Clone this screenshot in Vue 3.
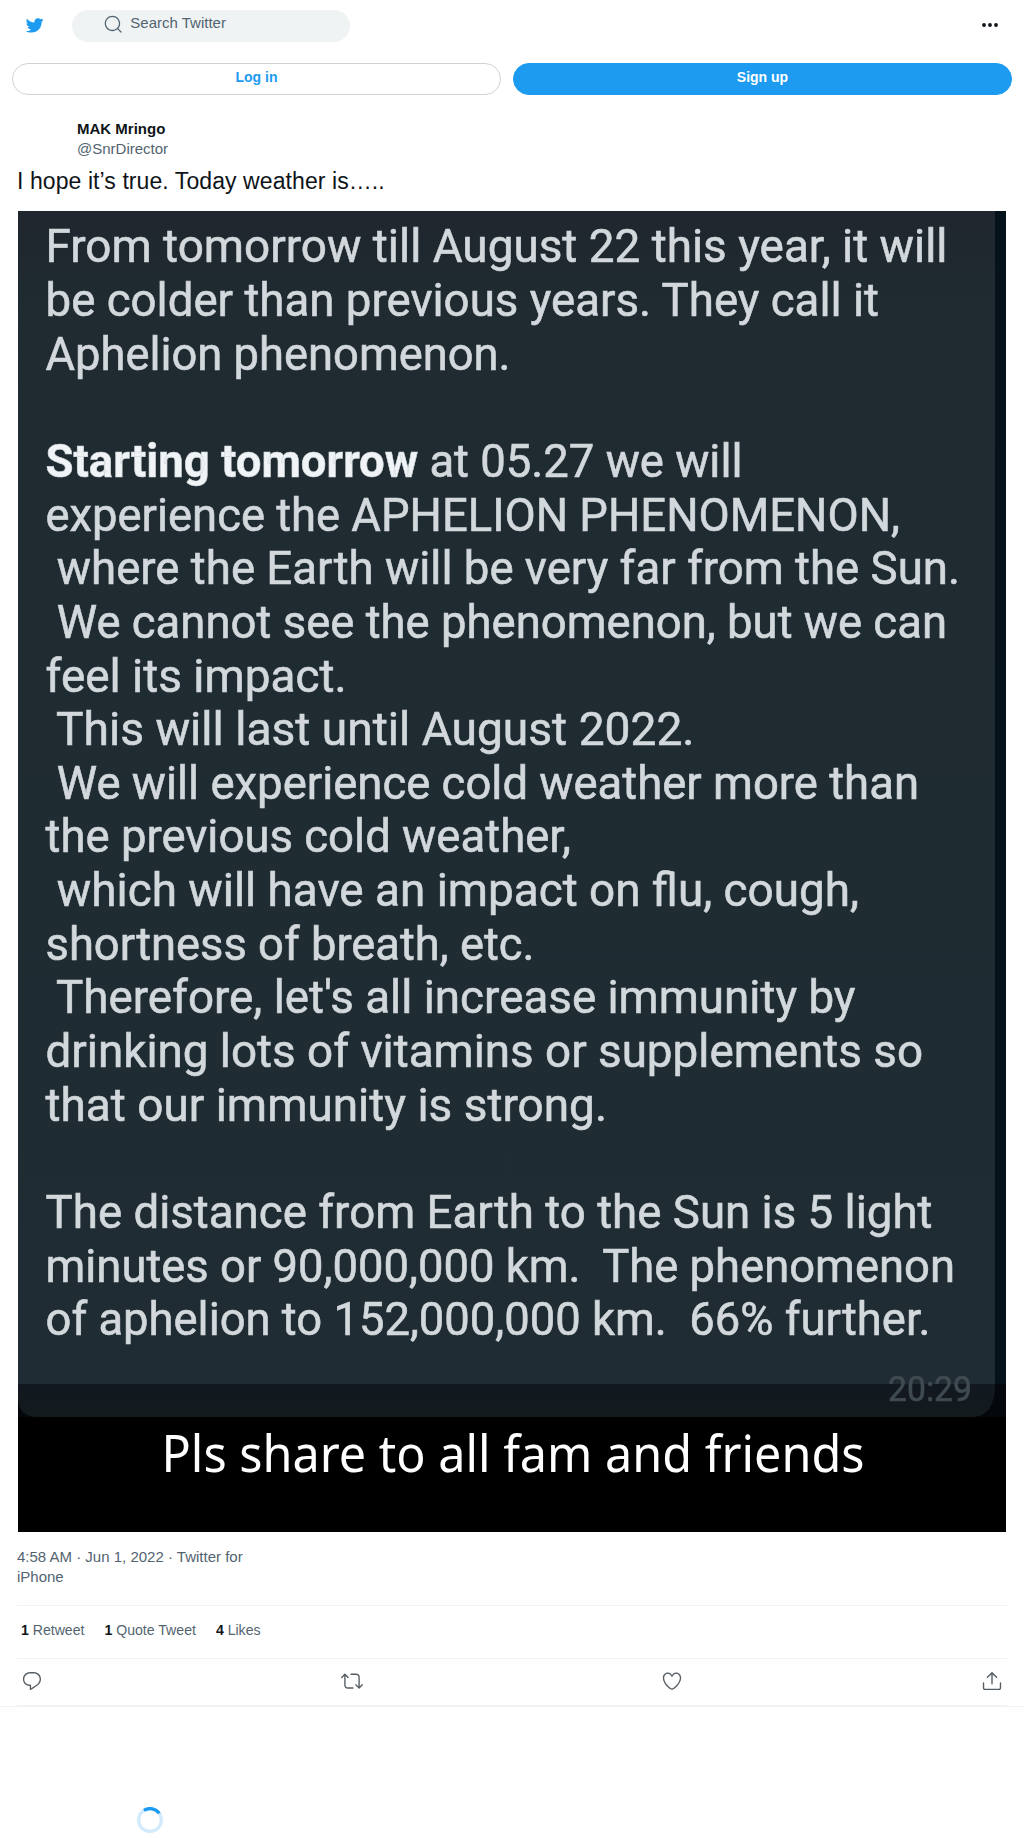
<script setup>
// one entry per row of the message, width is the row's length in the photo
const lines = [
  { row: 0, text: 'From tomorrow till August 22 this year, it will', width: 902 },
  { row: 1, text: 'be colder than previous years. They call it', width: 833.5 },
  { row: 2, text: 'Aphelion phenomenon.', width: 465 },
  { row: 4, bold: 'Starting tomorrow', text: ' at 05.27 we will', width: 697 },
  { row: 5, text: 'experience the APHELION PHENOMENON,', width: 854.5 },
  { row: 6, text: ' where the Earth will be very far from the Sun.', width: 914.5 },
  { row: 7, text: ' We cannot see the phenomenon, but we can', width: 901.5 },
  { row: 8, text: 'feel its impact.', width: 301 },
  { row: 9, text: ' This will last until August 2022.', width: 649 },
  { row: 10, text: ' We will experience cold weather more than', width: 873.5 },
  { row: 11, text: 'the previous cold weather,', width: 525.5 },
  { row: 12, text: ' which will have an impact on flu, cough,', width: 813.5 },
  { row: 13, text: 'shortness of breath, etc.', width: 489 },
  { row: 14, text: " Therefore, let's all increase immunity by", width: 810 },
  { row: 15, text: 'drinking lots of vitamins or supplements so', width: 877.5 },
  { row: 16, text: 'that our immunity is strong.', width: 561.5 },
  { row: 18, text: 'The distance from Earth to the Sun is 5 light', width: 887 },
  { row: 19, text: 'minutes or 90,000,000 km.  The phenomenon', width: 909.5 },
  { row: 20, text: 'of aphelion to 152,000,000 km.  66% further.', width: 885 }
]

const stats = [
  { count: 1, label: 'Retweet' },
  { count: 1, label: 'Quote Tweet' },
  { count: 4, label: 'Likes' }
]

const actions = [
  {
    name: 'Reply',
    path: 'M14.046 2.242l-4.148-.01h-.002c-4.374 0-7.8 3.427-7.8 7.802 0 4.098 3.186 7.206 7.465 7.37v3.828c0 .108.044.286.12.403.142.225.384.347.632.347.138 0 .277-.038.402-.118.264-.168 6.473-4.14 8.088-5.506 1.902-1.61 3.04-3.97 3.043-6.312v-.017c-.006-4.367-3.43-7.787-7.8-7.788zm3.787 12.972c-1.134.96-4.862 3.405-6.772 4.643V16.67c0-.414-.335-.75-.75-.75h-.396c-3.66 0-6.318-2.476-6.318-5.886 0-3.534 2.768-6.302 6.3-6.302l4.147.01h.002c3.532 0 6.3 2.766 6.302 6.296-.003 1.91-.942 3.844-2.514 5.176z'
  },
  {
    name: 'Retweet',
    path: 'M23.77 15.67c-.292-.293-.767-.293-1.06 0l-2.22 2.22V7.65c0-2.068-1.683-3.75-3.75-3.75h-5.85c-.414 0-.75.336-.75.75s.336.75.75.75h5.85c1.24 0 2.25 1.01 2.25 2.25v10.24l-2.22-2.22c-.293-.293-.768-.293-1.06 0s-.294.768 0 1.06l3.5 3.5c.145.147.337.22.53.22s.383-.072.53-.22l3.5-3.5c.294-.292.294-.767 0-1.06zm-10.66 3.28H7.26c-1.24 0-2.25-1.01-2.25-2.25V6.46l2.22 2.22c.148.147.34.22.532.22s.384-.073.53-.22c.293-.293.293-.768 0-1.06l-3.5-3.5c-.293-.294-.768-.294-1.06 0l-3.5 3.5c-.294.292-.294.767 0 1.06s.767.293 1.06 0l2.22-2.22V16.7c0 2.068 1.683 3.75 3.75 3.75h5.85c.414 0 .75-.336.75-.75s-.337-.75-.75-.75z'
  },
  {
    name: 'Like',
    path: 'M12 21.638h-.014C9.403 21.59 1.95 14.856 1.95 8.478c0-3.064 2.525-5.754 5.403-5.754 2.29 0 3.83 1.58 4.646 2.73.814-1.148 2.354-2.73 4.645-2.73 2.88 0 5.404 2.69 5.404 5.755 0 6.376-7.454 13.11-10.037 13.157H12zM7.354 4.225c-2.08 0-3.903 1.988-3.903 4.255 0 5.74 7.034 11.596 8.55 11.658 1.518-.062 8.55-5.917 8.55-11.658 0-2.267-1.823-4.255-3.903-4.255-2.528 0-3.94 2.936-3.952 2.965-.23.562-1.156.562-1.387 0-.014-.03-1.425-2.965-3.954-2.965z'
  },
  {
    name: 'Share',
    path: 'M17.53 7.47l-5-5c-.293-.293-.768-.293-1.06 0l-5 5c-.294.293-.294.768 0 1.06s.767.294 1.06 0l3.72-3.72V15c0 .414.336.75.75.75s.75-.336.75-.75V4.81l3.72 3.72c.146.147.338.22.53.22s.384-.072.53-.22c.293-.293.293-.767 0-1.06zM19.708 21.944H4.292C3.028 21.944 2 20.916 2 19.652V14c0-.414.336-.75.75-.75s.75.336.75.75v5.652c0 .437.355.792.792.792h15.416c.437 0 .792-.355.792-.792V14c0-.414.336-.75.75-.75s.75.336.75.75v5.652c0 1.264-1.028 2.292-2.292 2.292z'
  }
]
</script>

<template>
  <div class="page">
    <header class="topbar">
      <svg class="logo" viewBox="0 0 24 24">
        <path d="M23.643 4.937c-.835.37-1.732.62-2.675.733.962-.576 1.7-1.49 2.048-2.578-.9.534-1.897.922-2.958 1.13-.85-.904-2.06-1.47-3.4-1.47-2.572 0-4.658 2.086-4.658 4.66 0 .364.042.718.12 1.06-3.873-.195-7.304-2.05-9.602-4.868-.4.69-.63 1.49-.63 2.342 0 1.616.823 3.043 2.072 3.878-.764-.025-1.482-.234-2.11-.583v.06c0 2.257 1.605 4.14 3.737 4.568-.392.106-.803.162-1.227.162-.3 0-.593-.028-.877-.082.593 1.85 2.313 3.198 4.352 3.234-1.595 1.25-3.604 1.995-5.786 1.995-.376 0-.747-.022-1.112-.065 2.062 1.323 4.51 2.093 7.14 2.093 8.57 0 13.255-7.098 13.255-13.254 0-.2-.005-.402-.014-.602.91-.658 1.7-1.477 2.323-2.41z" />
      </svg>
      <div class="search">
        <svg viewBox="0 0 24 24">
          <path d="M21.53 20.47l-3.66-3.66C19.195 15.24 20 13.214 20 11c0-4.97-4.03-9-9-9s-9 4.03-9 9 4.03 9 9 9c2.215 0 4.24-.804 5.808-2.13l3.66 3.66c.147.146.34.22.53.22s.385-.073.53-.22c.295-.293.295-.767.002-1.06zM3.5 11c0-4.135 3.365-7.5 7.5-7.5s7.5 3.365 7.5 7.5-3.365 7.5-7.5 7.5-7.5-3.365-7.5-7.5z" />
        </svg>
        <span>Search Twitter</span>
      </div>
      <svg class="more" viewBox="0 0 16 4">
        <circle cx="2" cy="2" r="1.9" />
        <circle cx="8" cy="2" r="1.9" />
        <circle cx="14" cy="2" r="1.9" />
      </svg>
    </header>

    <div class="auth">
      <button class="btn login">Log in</button>
      <button class="btn signup">Sign up</button>
    </div>

    <article class="tweet">
      <div class="author">
        <strong>MAK Mringo</strong>
        <span>@SnrDirector</span>
      </div>
      <p class="tweet-text">I hope it’s true. Today weather is…..</p>

      <svg class="photo" viewBox="0 0 988 1321">
        <defs>
          <linearGradient id="bubble" x1="0" y1="0" x2="0" y2="1">
            <stop offset="0" stop-color="#20262e" />
            <stop offset="0.08" stop-color="#1f2b31" />
            <stop offset="1" stop-color="#1f2c33" />
          </linearGradient>
          <linearGradient id="shade" x1="0" y1="0" x2="0" y2="1">
            <stop offset="0" stop-color="#12181f" />
            <stop offset="1" stop-color="#141b1d" />
          </linearGradient>
        </defs>
        <rect width="988" height="1321" fill="#000" />
        <rect width="988" height="1173" fill="#06121a" />
        <rect y="1173" width="988" height="33" fill="#04080c" />
        <rect width="977" height="1173" fill="url(#bubble)" />
        <path d="M0 1173h977q0 33-24 33H20Q0 1206 0 1186z" fill="url(#shade)" />

        <g class="message">
          <text
            v-for="line in lines"
            :key="line.row"
            x="27.5"
            :y="51.3 + line.row * 53.65"
            :textLength="line.width"
            lengthAdjust="spacingAndGlyphs"
          ><tspan v-if="line.bold" class="bold">{{ line.bold }}</tspan>{{ line.text }}</text>
          <text class="sent" x="870" y="1189.5" textLength="84" lengthAdjust="spacingAndGlyphs">20:29</text>
        </g>

        <text class="caption" x="143.5" y="1260.5" textLength="703" lengthAdjust="spacingAndGlyphs">Pls share to all fam and friends</text>
      </svg>

      <p class="date">4:58 AM · Jun 1, 2022 · Twitter for iPhone</p>

      <div class="stats">
        <span v-for="stat in stats" :key="stat.label"><b>{{ stat.count }}</b> {{ stat.label }}</span>
      </div>

      <div class="actions">
        <svg v-for="action in actions" :key="action.name" viewBox="0 0 24 24" :aria-label="action.name">
          <path :d="action.path" />
        </svg>
      </div>
    </article>

    <div class="replies">
      <svg class="spinner" viewBox="0 0 32 32">
        <circle cx="16" cy="16" r="14" />
        <circle class="arc" cx="16" cy="16" r="14" />
      </svg>
    </div>
  </div>
</template>

<style>
body {
  margin: 0;
  background: #fff;
}
</style>

<style scoped>
.page {
  width: 1024px;
  height: 1838px;
  overflow: hidden;
  font-family: 'Liberation Sans', Arial, sans-serif;
  font-size: 15px;
  line-height: 20px;
  color: #0f1419;
}

.page * {
  box-sizing: border-box;
}

.topbar {
  display: flex;
  align-items: center;
  height: 52px;
  padding: 0 26px 0 25px;
}

.logo {
  width: 18.75px;
  height: 18.75px;
  margin-top: -2px;
  fill: #1d9bf0;
}

.search {
  display: flex;
  gap: 7px;
  width: 278px;
  height: 32px;
  margin-left: 28px;
  padding: 4px 0 0 31px;
  border-radius: 16px;
  background: #eff3f4;
  color: #536471;
}

.search svg {
  width: 20.6px;
  height: 20.6px;
  fill: #536471;
}

.search span {
  margin-top: -1px;
}

.more {
  width: 16px;
  height: 4px;
  margin: -2px 0 0 auto;
  fill: #0f1419;
}

.auth {
  display: flex;
  gap: 12px;
  padding: 11px 12px 0;
}

.btn {
  height: 32px;
  padding: 0 0 4px;
  border: 1px solid #cfd3d6;
  border-radius: 16px;
  font-family: inherit;
  font-size: 14px;
  font-weight: bold;
}

.login {
  width: 489px;
  background: #fff;
  color: #1d9bf0;
}

.signup {
  width: 499px;
  border-color: #1d9bf0;
  background: #1d9bf0;
  color: #fff;
}

.tweet {
  padding: 0 17px;
}

.author {
  display: flex;
  flex-direction: column;
  height: 68px;
  padding: 24px 0 0 60px;
}

.author span {
  color: #536471;
}

.tweet-text {
  height: 48px;
  margin: 0;
  padding-top: 4px;
  font-size: 23px;
  line-height: 28px;
  letter-spacing: 0.08px;
}

.photo {
  display: block;
  width: 988px;
  height: 1321px;
  margin-left: 1px;
}

.message {
  fill: #d2d8dc;
  font-family: Roboto, sans-serif;
  font-size: 46px;
  filter: blur(0.7px);
}

.message text {
  white-space: pre;
  stroke: #d2d8dc;
  stroke-width: 0.6px;
}

.message .bold {
  fill: #f0f4f7;
  font-weight: bold;
}

.message .sent {
  fill: #3f4a51;
  stroke: #3f4a51;
  font-size: 35px;
}

.caption {
  fill: #fff;
  font-family: 'Noto Sans', sans-serif;
  font-size: 51px;
}

.date {
  width: 250px;
  height: 73px;
  margin: 0;
  padding-top: 15px;
  color: #536471;
}

.stats {
  display: flex;
  gap: 20px;
  height: 53px;
  padding: 14px 4px 0;
  border-top: 1px solid #eff3f4;
  color: #536471;
  font-size: 14.1px;
}

.stats b {
  color: #0f1419;
}

.actions {
  display: flex;
  justify-content: space-between;
  height: 48px;
  padding: 11px 4px 0;
  border-top: 1px solid #eff3f4;
  border-bottom: 1px solid #eff3f4;
}

.actions svg {
  width: 22px;
  height: 22px;
  fill: #565d63;
}

.replies {
  padding: 100px 0 0 137px;
  border-top: 1px solid #eff3f4;
}

.spinner {
  display: block;
  width: 26px;
  height: 26px;
  fill: none;
  stroke: #d2ebfc;
  stroke-width: 4;
}

.arc {
  stroke: #1d9bf0;
  stroke-dasharray: 21 67;
  transform: rotate(-122deg);
  transform-origin: center;
}
</style>
